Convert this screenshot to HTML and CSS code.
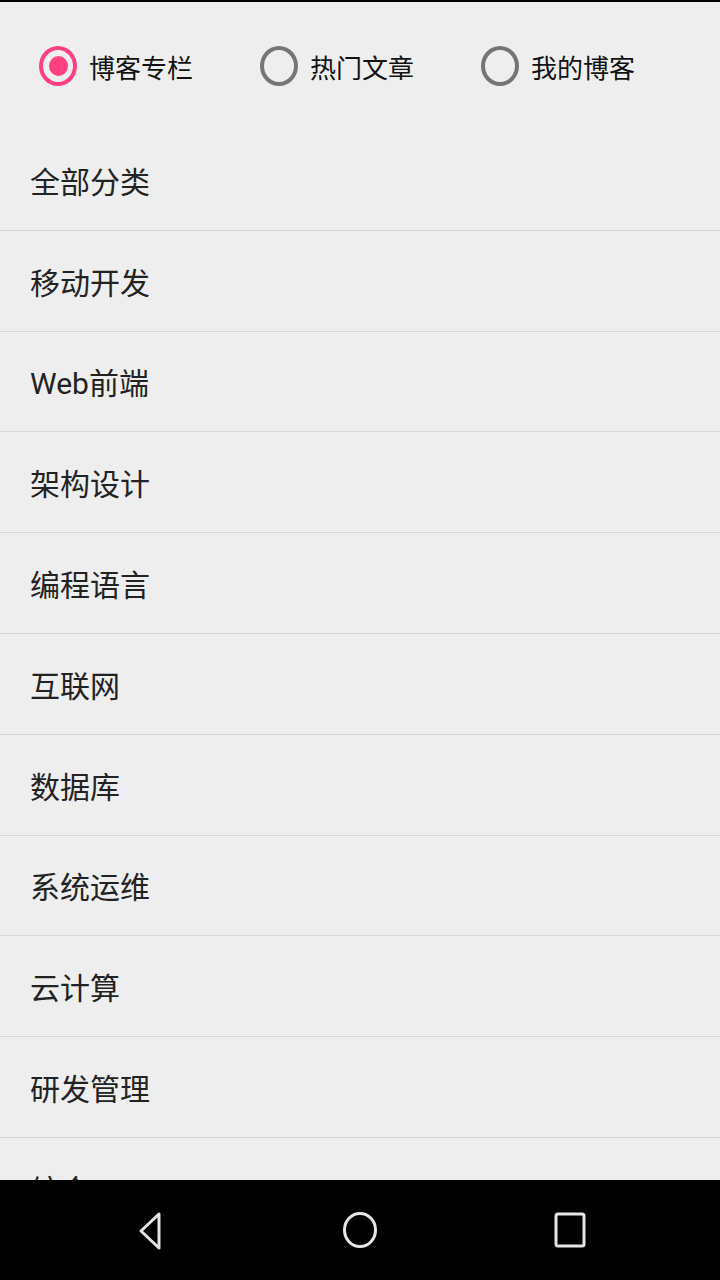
FILE: index.html
```html
<!DOCTYPE html>
<html>
<head>
	<meta charset="utf-8">
	<title>博客分类</title>
	<link rel="stylesheet" href="styles.css">
</head>
<body>
	<div class="screen">
		<div class="status-line"></div>
		<div class="content">
			<div class="tabs">
				<label class="tab">
					<span class="radio checked"><span class="dot"></span></span>
					<span class="tab-text">博客专栏</span>
				</label>
				<label class="tab">
					<span class="radio"></span>
					<span class="tab-text">热门文章</span>
				</label>
				<label class="tab">
					<span class="radio"></span>
					<span class="tab-text">我的博客</span>
				</label>
			</div>
			<ul class="list">
				<li>全部分类</li>
				<li>移动开发</li>
				<li>Web前端</li>
				<li>架构设计</li>
				<li>编程语言</li>
				<li>互联网</li>
				<li>数据库</li>
				<li>系统运维</li>
				<li>云计算</li>
				<li>研发管理</li>
				<li>综合</li>
			</ul>
		</div>
		<div class="navbar">
			<svg class="nav-icon" width="40" height="44" viewBox="0 0 40 44">
				<path d="M29 6 L29 40 L11 23 Z" fill="none" stroke="#e6e6e6" stroke-width="3" stroke-linejoin="round"/>
			</svg>
			<svg class="nav-icon" width="40" height="44" viewBox="0 0 40 44">
				<ellipse cx="20" cy="22" rx="15.5" ry="16.5" fill="none" stroke="#e6e6e6" stroke-width="3"/>
			</svg>
			<svg class="nav-icon" width="40" height="44" viewBox="0 0 40 44">
				<rect x="6" y="6" width="28" height="32" rx="2" fill="none" stroke="#e6e6e6" stroke-width="3"/>
			</svg>
		</div>
	</div>
</body>
</html>
```

FILE: styles.css
```css
html, body {
	margin: 0;
	padding: 0;
}
body {
	background-color: #eeeeee;
	font-family: Roboto, "Noto Sans CJK SC", sans-serif;
}
.screen {
	width: 720px;
	height: 1280px;
	display: flex;
	flex-direction: column;
	overflow: hidden;
}
.status-line {
	height: 2px;
	background-color: #000;
	flex-shrink: 0;
}
.content {
	flex: 1;
	overflow: hidden;
}
.tabs {
	height: 128px;
	display: flex;
	align-items: center;
	padding-left: 39px;
	box-sizing: border-box;
}
.tab {
	width: 221px;
	display: flex;
	align-items: center;
	gap: 12px;
}
.radio {
	width: 38px;
	height: 40px;
	box-sizing: border-box;
	border: 4px solid #757575;
	border-radius: 50%;
	display: flex;
	align-items: center;
	justify-content: center;
	flex-shrink: 0;
}
.radio.checked {
	border-color: #ff4081;
}
.dot {
	width: 19px;
	height: 20px;
	border-radius: 50%;
	background-color: #ff4081;
}
.tab-text {
	font-size: 26px;
	color: #111;
}
.list {
	list-style: none;
	margin: 0;
	padding: 0;
}
.list li {
	height: 100.8px;
	box-sizing: border-box;
	border-bottom: 1px solid #d6d6d6;
	padding-left: 30px;
	display: flex;
	align-items: center;
	font-size: 30px;
	color: #222;
}
.navbar {
	height: 100px;
	flex-shrink: 0;
	background-color: #000;
	display: flex;
	align-items: center;
	justify-content: space-between;
	padding: 0 130px;
}
```
